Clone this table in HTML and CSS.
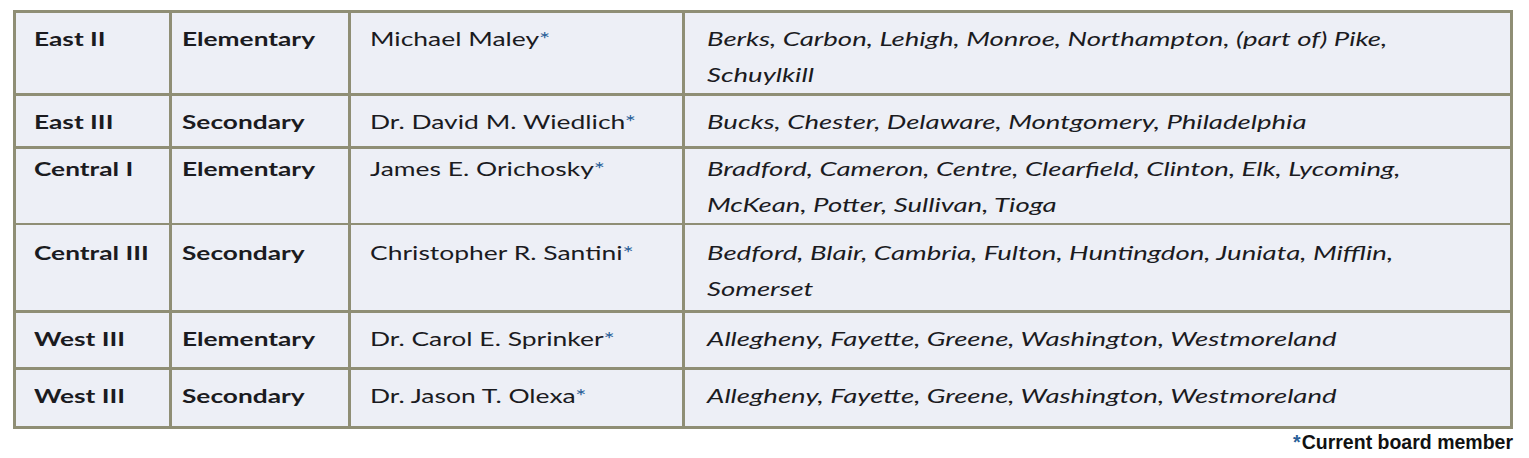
FILE: index.html
```html
<!DOCTYPE html>
<html>
<head>
<meta charset="utf-8">
<link rel="stylesheet" href="styles.css">
</head>
<body>
<div class="wrap">
  <div class="board">
    <div class="row row-1">
      <div class="cell c-region"><span class="t b">East II</span></div>
      <div class="cell c-level"><span class="t b">Elementary</span></div>
      <div class="cell c-name"><span class="t">Michael Maley<span class="ast">*</span></span></div>
      <div class="cell c-counties"><span class="t i">Berks, Carbon, Lehigh, Monroe, Northampton, (part of) Pike,<br>Schuylkill</span></div>
    </div>
    <div class="row row-2">
      <div class="cell c-region"><span class="t b">East III</span></div>
      <div class="cell c-level"><span class="t b">Secondary</span></div>
      <div class="cell c-name"><span class="t">Dr. David M. Wiedlich<span class="ast">*</span></span></div>
      <div class="cell c-counties"><span class="t i">Bucks, Chester, Delaware, Montgomery, Philadelphia</span></div>
    </div>
    <div class="row row-3">
      <div class="cell c-region"><span class="t b">Central I</span></div>
      <div class="cell c-level"><span class="t b">Elementary</span></div>
      <div class="cell c-name"><span class="t">James E. Orichosky<span class="ast">*</span></span></div>
      <div class="cell c-counties"><span class="t i">Bradford, Cameron, Centre, Clearfield, Clinton, Elk, Lycoming,<br>McKean, Potter, Sullivan, Tioga</span></div>
    </div>
    <div class="row row-4">
      <div class="cell c-region"><span class="t b">Central III</span></div>
      <div class="cell c-level"><span class="t b">Secondary</span></div>
      <div class="cell c-name"><span class="t">Christopher R. Santini<span class="ast">*</span></span></div>
      <div class="cell c-counties"><span class="t i">Bedford, Blair, Cambria, Fulton, Huntingdon, Juniata, Mifflin,<br>Somerset</span></div>
    </div>
    <div class="row row-5">
      <div class="cell c-region"><span class="t b">West III</span></div>
      <div class="cell c-level"><span class="t b">Elementary</span></div>
      <div class="cell c-name"><span class="t">Dr. Carol E. Sprinker<span class="ast">*</span></span></div>
      <div class="cell c-counties"><span class="t i">Allegheny, Fayette, Greene, Washington, Westmoreland</span></div>
    </div>
    <div class="row row-6">
      <div class="cell c-region"><span class="t b">West III</span></div>
      <div class="cell c-level"><span class="t b">Secondary</span></div>
      <div class="cell c-name"><span class="t">Dr. Jason T. Olexa<span class="ast">*</span></span></div>
      <div class="cell c-counties"><span class="t i">Allegheny, Fayette, Greene, Washington, Westmoreland</span></div>
    </div>
  </div>
  <div class="note"><span class="note-ast">*</span>Current board member</div>
</div>
</body>
</html>
```
FILE: styles.css
```css
html, body {
  margin: 0;
  padding: 0;
  background: #ffffff;
}

.wrap {
  width: 1500px;
  margin: 10px 0 0 13px;
}

.board {
  display: flex;
  flex-direction: column;
  gap: 3px;
  padding: 3px;
  background: #8f8e75;
}

.row {
  display: grid;
  grid-template-columns: 153px 176px 331px 825px;
  gap: 3px;
}

.row-1 { height: 80px; }
.row-2 { height: 50px; }
.row-3 { height: 73px; }
.row-4 { height: 85px; }
.row-5 { height: 54px; }
.row-6 { height: 56px; }

.cell {
  background: #edeff6;
  padding-top: 8px;
  box-sizing: border-box;
  font-family: Lato, "Open Sans", sans-serif;
  font-size: 18.5px;
  line-height: 36px;
  color: #1b1b1f;
}

.row-3 .cell { padding-top: 2px; }
.row-4 .cell { padding-top: 10px; }
.row-5 .cell { padding-top: 8px; }
.row-6 .cell { padding-top: 8px; }

.c-region { padding-left: 18px; }
.c-level { padding-left: 10px; }
.c-name { padding-left: 19px; }
.c-counties { padding-left: 22px; }

.t {
  display: inline-block;
  white-space: nowrap;
  transform: scaleX(1.43);
  transform-origin: 0 0;
}

.b {
  font-weight: 700;
  transform: scaleX(1.42);
}

.i {
  font-style: italic;
  transform: scaleX(1.49);
}

.ast {
  color: #2a5f98;
}

.note {
  margin-top: 2px;
  text-align: right;
  font-family: "Liberation Sans", Arial, sans-serif;
  font-weight: 700;
  font-size: 19.5px;
  line-height: 22px;
  color: #111111;
}

.note-ast {
  color: #2a5f98;
  margin-right: 1px;
}
```
